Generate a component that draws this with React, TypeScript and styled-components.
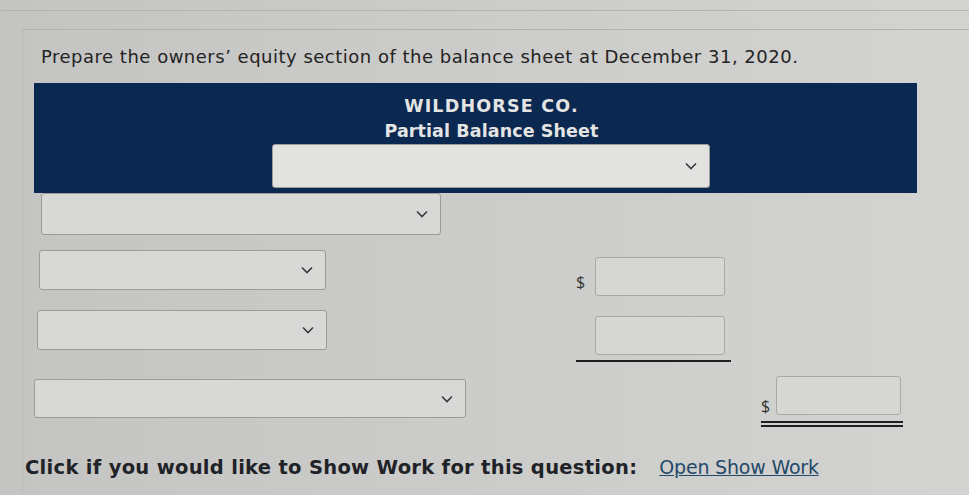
import React from "react";
import styled, { createGlobalStyle } from "styled-components";

const GlobalStyle = createGlobalStyle`
  html, body {
    margin: 0;
    padding: 0;
  }
  body {
    width: 969px;
    height: 495px;
    overflow: hidden;
    font-family: "DejaVu Sans", Verdana, sans-serif;
    background: linear-gradient(90deg, #c4c4c2 0%, #cbcbc9 45%, #d3d3d1 100%);
    color: #222;
  }
`;

const Page = styled.div`
  padding-top: 9px;
  border-top: 1px solid transparent;
`;

const TopRule = styled.div`
  height: 0;
  border-top: 1px solid #b3b3b1;
  margin-bottom: 18px;
`;

const Panel = styled.div`
  border-top: 1px solid #b1b1af;
  border-left: 1px solid #bcbcba;
  margin-left: 22px;
  padding: 16px 0 0 11px;
  height: 460px;
`;

const Prompt = styled.p`
  margin: 0 0 16px 7px;
  font-size: 18px;
  letter-spacing: 0.5px;
  color: #232323;
`;

const Header = styled.div`
  width: 883px;
  height: 110px;
  background: #0b2850;
  display: flex;
  flex-direction: column;
  align-items: center;
  padding-top: 11px;
  box-sizing: border-box;
`;

const Title = styled.div<{ $spacing: number }>`
  color: #e4e4e4;
  font-weight: bold;
  font-size: 17.5px;
  line-height: 25px;
  letter-spacing: ${(p) => p.$spacing}px;
  transform: translateX(16px);
`;

const Select = styled.div<{ $w: number; $h?: number }>`
  width: ${(p) => p.$w}px;
  height: ${(p) => p.$h ?? 40}px;
  box-sizing: border-box;
  border: 1px solid #9b9b9a;
  border-radius: 3px;
  background: #d8d8d7;
  display: flex;
  align-items: center;
  justify-content: flex-end;
  padding-right: 12px;
`;

const HeaderSelect = styled(Select)`
  background: #e2e2e1;
  margin-top: 0;
  transform: translateX(15px);
`;

const Chevron = () => (
  <svg width="12" height="8" viewBox="0 0 12 8" fill="none">
    <path d="M1 1.5 L6 6.5 L11 1.5" stroke="#3a3a3a" strokeWidth="1.6" />
  </svg>
);

const Row = styled.div<{ $top: number; $h: number; $indent: number }>`
  display: grid;
  grid-template-columns: ${(p) => 542 - p.$indent}px 19px 130px 36px 15px 127px;
  align-items: end;
  margin-top: ${(p) => p.$top}px;
  margin-left: ${(p) => p.$indent}px;
  height: ${(p) => p.$h}px;
`;

const Cell = styled.div<{ $col: number | string; $self?: string }>`
  grid-column: ${(p) => p.$col};
  grid-row: 1;
  align-self: ${(p) => p.$self ?? "end"};
`;

const Dollar = styled.span`
  display: block;
  font-family: "Open Sans", "DejaVu Sans", sans-serif;
  font-size: 16px;
  color: #333;
  padding-bottom: 3px;
`;

const Input = styled.div<{ $w: number; $shift?: number }>`
  width: ${(p) => p.$w}px;
  height: 39px;
  margin-left: ${(p) => p.$shift ?? 0}px;
  box-sizing: border-box;
  border: 1px solid #a9a9a8;
  border-radius: 3px;
  background: #d6d6d5;
`;

const Underline = styled.div<{ $double?: boolean; $w: number }>`
  width: ${(p) => p.$w}px;
  height: ${(p) => (p.$double ? 2 : 0)}px;
  border-top: 2px solid #1f1f1f;
  border-bottom: ${(p) => (p.$double ? "2px solid #1f1f1f" : "none")};
  margin-top: ${(p) => (p.$double ? 6 : 5)}px;
`;

const Footer = styled.div`
  display: flex;
  align-items: baseline;
  margin: 30px 0 0 -9px;
  font-size: 19.5px;
`;

const FooterText = styled.span`
  font-weight: bold;
  color: #1f2227;
  letter-spacing: 0.3px;
`;

const Link = styled.a`
  margin-left: 22px;
  color: #24486a;
  text-decoration: underline;
  font-size: 19px;
  letter-spacing: -0.2px;
`;

export default function App() {
  return (
    <>
      <GlobalStyle />
      <Page>
        <TopRule />
        <Panel>
          <Prompt>Prepare the owners’ equity section of the balance sheet at December 31, 2020.</Prompt>
          <Header>
            <Title $spacing={1.2}>WILDHORSE CO.</Title>
            <Title $spacing={0.1}>Partial Balance Sheet</Title>
            <HeaderSelect $w={438} $h={44}>
              <Chevron />
            </HeaderSelect>
          </Header>

          <Row $top={0} $h={42} $indent={7}>
            <Cell $col={1}>
              <Select $w={400} $h={42}>
                <Chevron />
              </Select>
            </Cell>
          </Row>

          <Row $top={15} $h={46} $indent={5}>
            <Cell $col={1} $self="start">
              <Select $w={287}>
                <Chevron />
              </Select>
            </Cell>
            <Cell $col={2}>
              <Dollar>$</Dollar>
            </Cell>
            <Cell $col={3}>
              <Input $w={130} />
            </Cell>
          </Row>

          <Row $top={14} $h={52} $indent={3}>
            <Cell $col={1} $self="start">
              <Select $w={290}>
                <Chevron />
              </Select>
            </Cell>
            <Cell $col="2 / span 2">
              <Input $w={130} $shift={19} />
              <Underline $w={155} />
            </Cell>
          </Row>

          <Row $top={14} $h={50} $indent={0}>
            <Cell $col={1} $self="start">
              <Select $w={432} $h={39} style={{ marginTop: 3 }}>
                <Chevron />
              </Select>
            </Cell>
            <Cell $col={5} $self="start" style={{ paddingTop: 19 }}>
              <Dollar>$</Dollar>
            </Cell>
            <Cell $col="5 / span 2">
              <Input $w={125} $shift={15} />
              <Underline $double $w={142} />
            </Cell>
          </Row>

          <Footer>
            <FooterText>Click if you would like to Show Work for this question:</FooterText>
            <Link href="#">Open Show Work</Link>
          </Footer>
        </Panel>
      </Page>
    </>
  );
}
